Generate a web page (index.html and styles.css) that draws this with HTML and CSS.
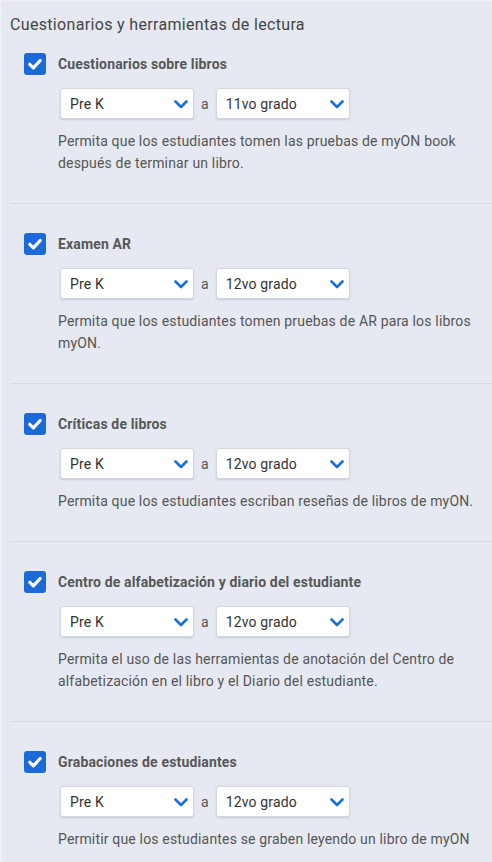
FILE: index.html
```html
<!DOCTYPE html>
<html lang="es">
<head>
<meta charset="utf-8">
<title>Cuestionarios y herramientas de lectura</title>
<link rel="stylesheet" href="styles.css">
</head>
<body>
<div class="panel">
  <h2 class="title">Cuestionarios y herramientas de lectura</h2>

  <section class="item first">
    <div class="check-row">
      <span class="checkbox"><svg viewBox="0 0 22 22" width="22" height="22"><path d="M5.8 11.3 L9.4 14.8 L16.2 7.5" fill="none" stroke="#fff" stroke-width="3.2" stroke-linecap="round" stroke-linejoin="round"/></svg></span>
      <span class="label">Cuestionarios sobre libros</span>
    </div>
    <div class="range">
      <div class="select"><span>Pre K</span><svg class="chev" viewBox="0 0 14 9" width="14" height="9"><path d="M1.5 1.5 L7 7 L12.5 1.5" fill="none" stroke="#1a6fdf" stroke-width="2.6" stroke-linecap="round" stroke-linejoin="round"/></svg></div>
      <span class="sep">a</span>
      <div class="select"><span>11vo grado</span><svg class="chev" viewBox="0 0 14 9" width="14" height="9"><path d="M1.5 1.5 L7 7 L12.5 1.5" fill="none" stroke="#1a6fdf" stroke-width="2.6" stroke-linecap="round" stroke-linejoin="round"/></svg></div>
    </div>
    <p class="desc">Permita que los estudiantes tomen las pruebas de myON book después de terminar un libro.</p>
  </section>

  <section class="item">
    <div class="check-row">
      <span class="checkbox"><svg viewBox="0 0 22 22" width="22" height="22"><path d="M5.8 11.3 L9.4 14.8 L16.2 7.5" fill="none" stroke="#fff" stroke-width="3.2" stroke-linecap="round" stroke-linejoin="round"/></svg></span>
      <span class="label">Examen AR</span>
    </div>
    <div class="range">
      <div class="select"><span>Pre K</span><svg class="chev" viewBox="0 0 14 9" width="14" height="9"><path d="M1.5 1.5 L7 7 L12.5 1.5" fill="none" stroke="#1a6fdf" stroke-width="2.6" stroke-linecap="round" stroke-linejoin="round"/></svg></div>
      <span class="sep">a</span>
      <div class="select"><span>12vo grado</span><svg class="chev" viewBox="0 0 14 9" width="14" height="9"><path d="M1.5 1.5 L7 7 L12.5 1.5" fill="none" stroke="#1a6fdf" stroke-width="2.6" stroke-linecap="round" stroke-linejoin="round"/></svg></div>
    </div>
    <p class="desc">Permita que los estudiantes tomen pruebas de AR para los libros myON.</p>
  </section>

  <section class="item">
    <div class="check-row">
      <span class="checkbox"><svg viewBox="0 0 22 22" width="22" height="22"><path d="M5.8 11.3 L9.4 14.8 L16.2 7.5" fill="none" stroke="#fff" stroke-width="3.2" stroke-linecap="round" stroke-linejoin="round"/></svg></span>
      <span class="label">Críticas de libros</span>
    </div>
    <div class="range">
      <div class="select"><span>Pre K</span><svg class="chev" viewBox="0 0 14 9" width="14" height="9"><path d="M1.5 1.5 L7 7 L12.5 1.5" fill="none" stroke="#1a6fdf" stroke-width="2.6" stroke-linecap="round" stroke-linejoin="round"/></svg></div>
      <span class="sep">a</span>
      <div class="select"><span>12vo grado</span><svg class="chev" viewBox="0 0 14 9" width="14" height="9"><path d="M1.5 1.5 L7 7 L12.5 1.5" fill="none" stroke="#1a6fdf" stroke-width="2.6" stroke-linecap="round" stroke-linejoin="round"/></svg></div>
    </div>
    <p class="desc">Permita que los estudiantes escriban reseñas de libros de myON.</p>
  </section>

  <section class="item">
    <div class="check-row">
      <span class="checkbox"><svg viewBox="0 0 22 22" width="22" height="22"><path d="M5.8 11.3 L9.4 14.8 L16.2 7.5" fill="none" stroke="#fff" stroke-width="3.2" stroke-linecap="round" stroke-linejoin="round"/></svg></span>
      <span class="label">Centro de alfabetización y diario del estudiante</span>
    </div>
    <div class="range">
      <div class="select"><span>Pre K</span><svg class="chev" viewBox="0 0 14 9" width="14" height="9"><path d="M1.5 1.5 L7 7 L12.5 1.5" fill="none" stroke="#1a6fdf" stroke-width="2.6" stroke-linecap="round" stroke-linejoin="round"/></svg></div>
      <span class="sep">a</span>
      <div class="select"><span>12vo grado</span><svg class="chev" viewBox="0 0 14 9" width="14" height="9"><path d="M1.5 1.5 L7 7 L12.5 1.5" fill="none" stroke="#1a6fdf" stroke-width="2.6" stroke-linecap="round" stroke-linejoin="round"/></svg></div>
    </div>
    <p class="desc">Permita el uso de las herramientas de anotación del Centro de alfabetización en el libro y el Diario del estudiante.</p>
  </section>

  <section class="item last">
    <div class="check-row">
      <span class="checkbox"><svg viewBox="0 0 22 22" width="22" height="22"><path d="M5.8 11.3 L9.4 14.8 L16.2 7.5" fill="none" stroke="#fff" stroke-width="3.2" stroke-linecap="round" stroke-linejoin="round"/></svg></span>
      <span class="label">Grabaciones de estudiantes</span>
    </div>
    <div class="range">
      <div class="select"><span>Pre K</span><svg class="chev" viewBox="0 0 14 9" width="14" height="9"><path d="M1.5 1.5 L7 7 L12.5 1.5" fill="none" stroke="#1a6fdf" stroke-width="2.6" stroke-linecap="round" stroke-linejoin="round"/></svg></div>
      <span class="sep">a</span>
      <div class="select"><span>12vo grado</span><svg class="chev" viewBox="0 0 14 9" width="14" height="9"><path d="M1.5 1.5 L7 7 L12.5 1.5" fill="none" stroke="#1a6fdf" stroke-width="2.6" stroke-linecap="round" stroke-linejoin="round"/></svg></div>
    </div>
    <p class="desc">Permitir que los estudiantes se graben leyendo un libro de myON</p>
  </section>
</div>
</body>
</html>
```

FILE: styles.css
```css
html, body {
  margin: 0;
  padding: 0;
}
body {
  background: #e6e9f1;
  font-family: Roboto, "Liberation Sans", Arial, sans-serif;
  color: #555;
  border-left: 1px solid #f3f4f8;
  border-top: 1px solid #eef0f5;
  min-height: 862px;
  box-sizing: border-box;
}
.panel {
  padding-left: 9px;
}
.title {
  margin: 0;
  padding-top: 13px;
  font-size: 16px;
  line-height: 22px;
  font-weight: 400;
  letter-spacing: 0.33px;
  color: #454545;
}
.item {
  padding: 29px 10px 29px 14px;
  border-bottom: 1px solid #d4d8e3;
}
.item.first {
  padding-top: 17px;
}
.item.last {
  border-bottom: none;
}
.check-row {
  display: flex;
  align-items: center;
  gap: 12px;
}
.checkbox {
  width: 22px;
  height: 22px;
  border-radius: 3px;
  background: #1b6ad8;
  display: flex;
  flex: none;
}
.label {
  font-size: 14px;
  font-weight: 700;
  letter-spacing: 0.15px;
  color: #575757;
}
.range {
  display: flex;
  align-items: center;
  gap: 7px;
  margin: 13px 0 0 36px;
}
.select {
  box-sizing: border-box;
  width: 134px;
  height: 31px;
  background: #fff;
  border: 1px solid #d3d7e2;
  border-radius: 3px;
  box-shadow: 0 1px 2px rgba(80, 90, 120, 0.22);
  display: flex;
  align-items: center;
  justify-content: space-between;
  padding: 0 5px 0 9px;
  font-size: 14px;
  letter-spacing: 0.15px;
  color: #333;
}
.chev {
  display: block;
  margin-top: 1px;
}
.sep {
  font-size: 14px;
  color: #555;
}
.desc {
  margin: 11px 0 0 34px;
  font-size: 14px;
  line-height: 22px;
  letter-spacing: 0.17px;
  color: #555;
}
```
